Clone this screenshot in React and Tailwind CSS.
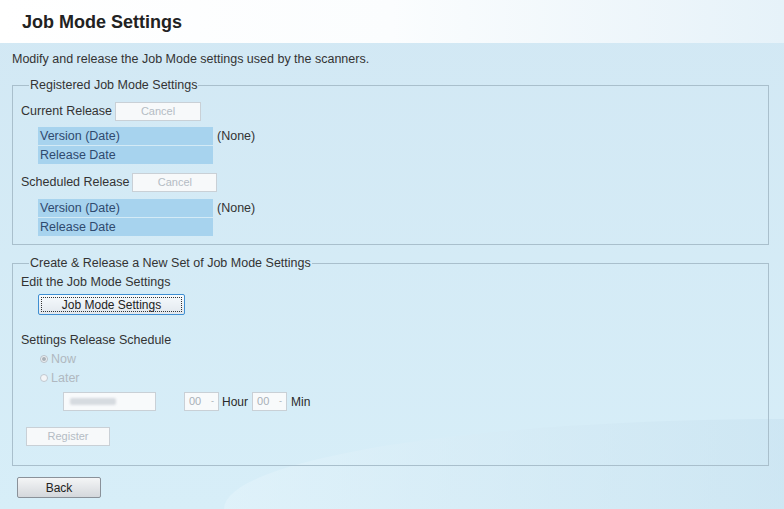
import React from "react";

function DisabledButton({ label, className = "" }) {
  return (
    <div
      className={
        "flex items-center justify-center border border-[#c9d0d6] bg-[#f7f9fa] text-[11px] text-[#b4bcc4] " +
        className
      }
    >
      {label}
    </div>
  );
}

function InfoTable() {
  return (
    <div className="ml-[17px] flex items-start">
      <div className="flex w-[175px] flex-col gap-[1px]">
        <div className="flex h-[18px] items-center bg-[#a7d3ee] pl-[2px] text-[#2f4a6e]">Version (Date)</div>
        <div className="flex h-[18px] items-center bg-[#a7d3ee] pl-[2px] text-[#2f4a6e]">Release Date</div>
      </div>
      <div className="ml-[4px] flex h-[18px] items-center text-[#333]">(None)</div>
    </div>
  );
}

function Select() {
  return (
    <div className="flex h-[19px] w-[35px] items-center justify-between border border-[#c9d0d6] bg-[#f8fafb] px-[4px] text-[11px] text-[#a8b0b8]">
      <span>00</span>
      <span className="text-[9px]">-</span>
    </div>
  );
}

export default function App() {
  return (
    <div
      className="relative h-[509px] w-[784px] overflow-hidden bg-gradient-to-b from-[#d2e8f4] to-[#d7eef8] text-[12.5px] text-[#333]"
      style={{ fontFamily: '"Liberation Sans", Arial, sans-serif' }}
    >
      <div className="pointer-events-none absolute bottom-0 right-0 h-[90px] w-[560px] rounded-tl-[100%] bg-gradient-to-r from-[#e4f4fb] to-[#c8e2f0] opacity-60" />
      <div className="relative flex h-[43px] items-center bg-gradient-to-r from-white via-[#fbfdfe] to-[#e6f2f9] pl-[22px]">
        <h1 className="text-[18px] font-bold leading-none text-[#222]">Job Mode Settings</h1>
      </div>
      <div className="relative px-[12px] pr-[15px]">
        <p className="mt-[9px] leading-[14px]">Modify and release the Job Mode settings used by the scanners.</p>

        <fieldset className="mt-[12px] border border-[#a9bfcc] px-[8px] pb-[8px]">
          <legend className="ml-[8px] px-[1px] leading-[14px]">Registered Job Mode Settings</legend>
          <div className="mt-[10px] flex items-center">
            <span>Current Release</span>
            <DisabledButton label="Cancel" className="ml-[3px] h-[19px] w-[86px]" />
          </div>
          <div className="mt-[6px]">
            <InfoTable />
          </div>
          <div className="mt-[9px] flex items-center">
            <span>Scheduled Release</span>
            <DisabledButton label="Cancel" className="ml-[3px] h-[19px] w-[85px]" />
          </div>
          <div className="mt-[7px]">
            <InfoTable />
          </div>
        </fieldset>

        <fieldset className="mt-[11px] border border-[#a9bfcc] px-[8px] pb-[19px]">
          <legend className="ml-[8px] px-[1px] leading-[14px]">Create &amp; Release a New Set of Job Mode Settings</legend>
          <div className="mt-[5px] leading-[14px]">Edit the Job Mode Settings</div>
          <div className="ml-[17px] mt-[5px] flex h-[21px] w-[147px] items-center justify-center rounded-[2px] border border-[#3f8fd2] bg-gradient-to-b from-[#f6fafd] to-[#e2e8ee] p-[2px]">
            <div className="flex h-full w-full items-center justify-center border border-dotted border-[#333] text-[12px] text-[#222]">
              Job Mode Settings
            </div>
          </div>
          <div className="mt-[18px] leading-[14px]">Settings Release Schedule</div>
          <div className="ml-[19px] mt-[5px] flex items-center gap-[3px] leading-[14px] text-[#b0b8c0]">
            <span className="flex h-[8px] w-[8px] items-center justify-center rounded-full border border-[#b8c0c8] bg-[#eef1f3]">
              <span className="h-[4px] w-[4px] rounded-full bg-[#a8b0b8]" />
            </span>
            <span>Now</span>
          </div>
          <div className="ml-[19px] mt-[5px] flex items-center gap-[3px] leading-[14px] text-[#b0b8c0]">
            <span className="h-[8px] w-[8px] rounded-full border border-[#c0c8d0] bg-[#f3f5f7]" />
            <span>Later</span>
          </div>
          <div className="ml-[42px] mt-[7px] flex items-center">
            <div className="flex h-[19px] w-[93px] items-center border border-[#c9d0d6] bg-[#f8fafb] pl-[6px]">
              <div className="h-[7px] w-[46px] rounded-[2px] bg-[#d6dbe0] blur-[1px]" />
            </div>
            <div className="ml-[28px]">
              <Select />
            </div>
            <span className="ml-[3px] text-[12px] text-[#2a2a2a]">Hour</span>
            <div className="ml-[4px]">
              <Select />
            </div>
            <span className="ml-[4px] text-[12px] text-[#2a2a2a]">Min</span>
          </div>
          <DisabledButton label="Register" className="ml-[5px] mt-[16px] h-[19px] w-[84px]" />
        </fieldset>

        <div className="ml-[5px] mt-[11px] flex h-[21px] w-[84px] items-center justify-center rounded-[2px] border border-[#8a9199] bg-gradient-to-b from-[#f4f5f6] to-[#d4d8dc] text-[12px] text-[#222]">
          Back
        </div>
      </div>
    </div>
  );
}
